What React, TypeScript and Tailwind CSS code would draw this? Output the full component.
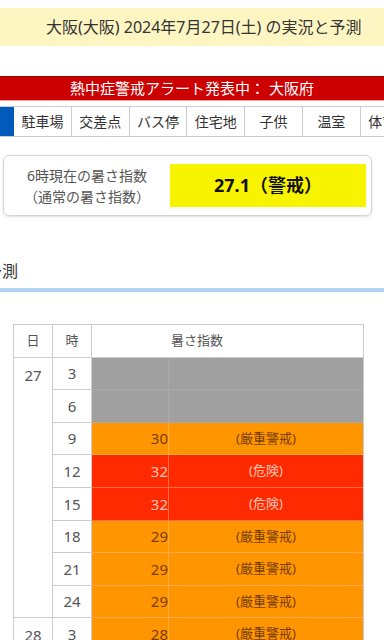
const font = { fontFamily: '"Noto Sans", "Noto Sans CJK JP", sans-serif' };

type Row = { h: number; v?: number; label?: string; level: 'none' | 'warn' | 'danger' };

const day27: Row[] = [
  { h: 3, level: 'none' },
  { h: 6, level: 'none' },
  { h: 9, v: 30, label: '(厳重警戒)', level: 'warn' },
  { h: 12, v: 32, label: '(危険)', level: 'danger' },
  { h: 15, v: 32, label: '(危険)', level: 'danger' },
  { h: 18, v: 29, label: '(厳重警戒)', level: 'warn' },
  { h: 21, v: 29, label: '(厳重警戒)', level: 'warn' },
  { h: 24, v: 29, label: '(厳重警戒)', level: 'warn' },
];

const day28: Row[] = [
  { h: 3, v: 28, label: '(厳重警戒)', level: 'warn' },
  { h: 6, v: 28, label: '(厳重警戒)', level: 'warn' },
  { h: 9, v: 31, label: '(危険)', level: 'danger' },
];

const tabs = ['駐車場', '交差点', 'バス停', '住宅地', '子供', '温室', '体育館'];

function cellClass(level: Row['level']) {
  if (level === 'danger') return 'bg-[#ff2a00] text-[#ffc4b4] border-[#ff6a4a]';
  if (level === 'warn') return 'bg-[#ff9500] text-[#7a3e00] border-[#ffad45]';
  return 'bg-[#a0a0a0] text-transparent border-[#aaaaaa]';
}

function HourRows({ rows }: { rows: Row[] }) {
  return (
    <>
      {rows.map((r) => (
        <div key={r.h} className="contents">
          <div className="flex items-center justify-center border-r border-b border-[#cccccc] bg-white text-[15px] text-[#555]">
            {r.h}
          </div>
          <div className={`flex items-center justify-end border-r border-b text-[15px] ${cellClass(r.level)}`}>
            {r.v ?? ''}
          </div>
          <div className={`flex items-center justify-center border-b text-[13px] ${cellClass(r.level)}`}>
            {r.label ?? ''}
          </div>
        </div>
      ))}
    </>
  );
}

export default function App() {
  return (
    <div className="h-[640px] w-[384px] overflow-hidden bg-white pt-2" style={font}>
      {/* title band */}
      <div className="flex h-[38px] items-center bg-[#fdf5c2] pl-[46px] text-[16px] text-[#333]">
        大阪(大阪) 2024年7月27日(土) の実況と予測
      </div>

      {/* alert bar */}
      <div className="mt-[30px] flex h-[25px] items-center justify-center border-t border-b border-t-[#9a0000] border-b-[#f3a0a0] bg-[#cc0000] text-[15px] text-white">
        熱中症警戒アラート発表中： 大阪府
      </div>

      {/* tabs */}
      <div className="mt-[5px] flex h-[31px] whitespace-nowrap border-y border-[#cccccc]">
        <div className="w-[14px] shrink-0 bg-[#005bbb]" />
        {tabs.map((t) => (
          <div
            key={t}
            className="flex w-[57.8px] shrink-0 items-center justify-center border-r border-[#cccccc] text-[14px] text-[#333]"
          >
            {t}
          </div>
        ))}
      </div>

      {/* current value */}
      <div className="ml-[3px] mt-[18px] flex h-[61px] w-[369px] items-center rounded-md border border-[#d4d4d4] shadow-sm">
        <div className="w-[166px] text-center text-[14px] leading-[21px] text-[#555]">
          <div>6時現在の暑さ指数</div>
          <div>（通常の暑さ指数）</div>
        </div>
        <div className="flex h-[43px] w-[196px] items-center justify-center bg-[#f8f400] text-[18px] font-bold text-[#111]">
          27.1（警戒）
        </div>
      </div>

      {/* forecast heading */}
      <div className="mt-[43px] -ml-[14px] whitespace-nowrap text-[16px] leading-[24px] text-[#333]">予測</div>
      <div className="mt-[5px] h-[4px] bg-[#b3d4f7]" />

      {/* forecast table */}
      <div className="ml-[13px] mt-[32px] grid w-[351px] grid-cols-[39px_39px_77px_1fr] auto-rows-[32.6px] border-t border-l border-r border-[#cccccc]">
        <div className="flex h-[33px] items-center justify-center border-r border-b border-[#cccccc] text-[13px] text-[#555]">日</div>
        <div className="flex h-[33px] items-center justify-center border-r border-b border-[#cccccc] text-[13px] text-[#555]">時</div>
        <div className="col-span-2 flex h-[33px] items-center border-b border-[#cccccc] pl-[79px] text-[13px] text-[#555]">暑さ指数</div>

        <div className="row-span-8 border-r border-b border-[#cccccc] text-center text-[15px] leading-[34px] text-[#555]">27</div>
        <HourRows rows={day27} />

        <div className="row-span-3 border-r border-b border-[#cccccc] text-center text-[15px] leading-[34px] text-[#555]">28</div>
        <HourRows rows={day28} />
      </div>
    </div>
  );
}
